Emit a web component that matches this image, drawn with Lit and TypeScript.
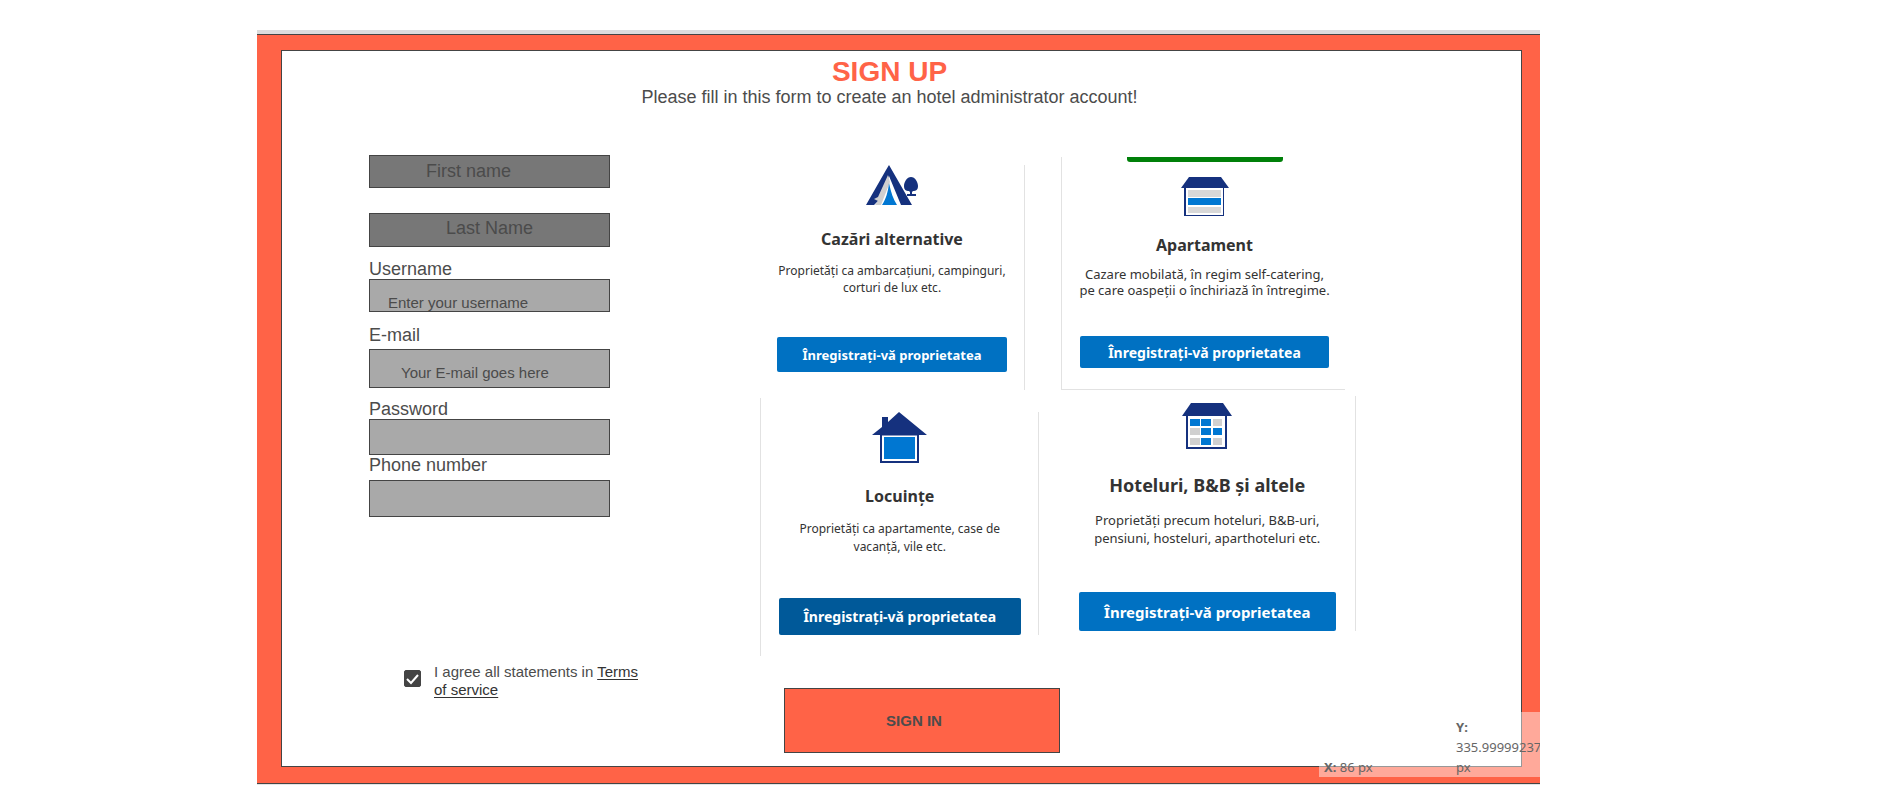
import { LitElement, html, css, svg, nothing } from "lit";
import { customElement } from "lit/decorators.js";

const tentIcon = svg`
  <svg class="icon" width="52" height="41" viewBox="0 0 52 41" aria-hidden="true">
    <path fill="#15317e" d="M23 0 46 40H35L23 11 12 36 8 40H0L20 5Z"/>
    <path fill="#cfcfcf" d="M22 10 24 17 15 40H9L12 36 8 34 12 32Z"/>
    <path fill="#0077d2" d="M23 18C25 27 27 34 31 40H16C20 34 22 27 23 18Z"/>
    <path fill="#15317e" d="M45 12c4 0 7 5 7 9s-2 5-5 5l-1 1v2h4v2h-9v-2h3v-2l-1-1c-3 0-5-1-5-5s3-9 7-9Z"/>
  </svg>`;

const shutterIcon = svg`
  <svg class="icon" width="48" height="39" viewBox="0 0 48 39" aria-hidden="true">
    <path fill="#15317e" d="M8 0H40L48 11H0Z"/>
    <path fill="#15317e" d="M3 11H43V39H3Z"/>
    <path fill="#fff" d="M5 11H42V38H5Z"/>
    <path fill="#d8d8d8" d="M7 13H40V20H7ZM7 30H40V36H7Z"/>
    <path fill="#0077d2" d="M7 21H40V28H7Z"/>
  </svg>`;

const houseIcon = svg`
  <svg class="icon" width="55" height="51" viewBox="0 0 55 51" aria-hidden="true">
    <path fill="#15317e" d="M0 23 10 15V5H16V10L27 0 55 23H47V51H8V23Z"/>
    <path fill="#fff" d="M10 23.500H45V49H10Z"/>
    <path fill="#0077d2" d="M12 25H43V47H12Z"/>
  </svg>`;

const hotelIcon = svg`
  <svg class="icon" width="50" height="46" viewBox="0 0 50 46" aria-hidden="true">
    <path fill="#15317e" d="M9 0H41L50 13H0Z"/>
    <path fill="#15317e" d="M4 13H45V46H4Z"/>
    <path fill="#fff" d="M6 13H43V44H6Z"/>
    <path fill="#d0d0d0" d="M31 16H40V23H31ZM8 25H18V32H8ZM8 35H18V42H8ZM31 35H40V42H31Z"/>
    <path fill="#0077d2" d="M8 16H18V23H8ZM19 16H29V23H19ZM19 25H29V32H19ZM31 25H40V32H31ZM19 35H29V42H19Z"/>
  </svg>`;

const rows = [
  [
    { kind: "alt", icon: tentIcon, title: "Cazări alternative",
      lines: ["Proprietăți ca ambarcațiuni, campinguri,", "corturi de lux etc."] },
    { kind: "apt", icon: shutterIcon, title: "Apartament", bar: true,
      lines: ["Cazare mobilată, în regim self-catering,", "pe care oaspeții o închiriază în întregime."] },
  ],
  [
    { kind: "home", icon: houseIcon, title: "Locuințe",
      lines: ["Proprietăți ca apartamente, case de", "vacanță, vile etc."] },
    { kind: "hotel", icon: hotelIcon, title: "Hoteluri, B&B și altele",
      lines: ["Proprietăți precum hoteluri, B&B-uri,", "pensiuni, hosteluri, aparthoteluri etc."] },
  ],
];

@customElement("app-root")
export class AppRoot extends LitElement {
  static styles = css`
    :host {
      display: block;
      padding: 30px 352px 24px 257px;
      background: #fff;
      color: #4c4c4c;
      font-family: "Liberation Sans", Arial, sans-serif;
    }
    *, *::before { box-sizing: border-box; }
    h1, h2, p { margin: 0; }
    input, button { font-family: inherit; color: inherit; margin: 0; border-radius: 0; }

    .frame {
      position: relative;
      overflow: hidden;
      border-top: 4px solid #dcdcdc;
      border-bottom: 1px solid #e4e4e4;
    }
    .band {
      background: #ff6347;
      border: solid #444;
      border-width: 1px 0;
      padding: 15px 18px 16px 24px;
    }
    .sheet {
      background: #fff;
      border: 1px solid #444;
      padding: 6px 0 13px;
    }
    .head { text-align: center; padding-right: 24px; }
    h1 { font-size: 28px; line-height: 30px; color: #ff6347; }
    .lead { font-size: 18px; line-height: 20px; }

    form {
      display: grid;
      grid-template-columns: 270px minmax(0, 1fr);
      column-gap: 121px;
      padding: 0 165px 0 87px;
      margin-top: 48px;
    }
    .fields { display: flex; flex-direction: column; align-items: flex-start; }
    .fields label.name { font-size: 18px; line-height: 20px; }
    .box {
      width: 241px;
      border: 1px solid #444;
      background: #a9a9a9;
      font-size: 15px;
      outline: 0;
    }
    .box::placeholder { color: #4b4b4b; opacity: 1; }
    .dark { background: #777; font-size: 18px; }
    .first { height: 33px; padding: 0 0 0 56px; margin-bottom: 25px; }
    .last { height: 34px; padding: 0 0 4px 76px; margin-bottom: 12px; }
    .user { height: 33px; padding: 14px 0 0 18px; margin-bottom: 13px; }
    .mail { height: 39px; padding: 8px 0 0 31px; margin: 4px 0 11px; }
    .pass { height: 36px; padding: 0 16px; }
    .phone { height: 37px; padding: 0 16px; margin-top: 5px; }

    .agree {
      display: flex;
      gap: 13px;
      margin-top: 146px;
      padding-left: 35px;
      font-size: 15px;
      line-height: 18px;
    }
    .tick {
      appearance: none;
      flex: none;
      width: 17px;
      height: 17px;
      margin-top: 7px;
      border: 1px solid #444;
      border-radius: 2px;
    }
    .tick:checked {
      background: #444 url("data:image/svg+xml,%3Csvg xmlns='http://www.w3.org/2000/svg' viewBox='0 0 15 15'%3E%3Cpath d='M2 8l4 4 7-8' fill='none' stroke='white' stroke-width='2'/%3E%3C/svg%3E");
    }
    .agree a { color: #333; text-underline-offset: 2px; }

    .row { display: flex; }
    .upper { min-height: 235px; padding: 2px 11px 0 0; gap: 36px; }
    .lower { min-height: 266px; padding-top: 6px; gap: 20px; }
    .card { display: flex; font-family: "Noto Sans", "Open Sans", sans-serif; color: #333; min-width: 0; }
    .body {
      flex: 1;
      min-width: 0;
      display: flex;
      flex-direction: column;
      align-items: center;
      text-align: center;
    }
    .icon { display: block; flex: none; }
    .bar { width: 156px; height: 5px; margin-bottom: 15px; background: #008009; border-radius: 0 0 3px 3px; }
    h2 { font-size: 16px; line-height: 20px; white-space: nowrap; }
    .desc { font-size: 12px; white-space: nowrap; }
    .desc span { display: block; }
    .reg {
      width: 100%;
      margin-top: auto;
      padding: 0;
      border: 0;
      border-radius: 2px;
      background: #0071c2;
      color: #fff;
      font-size: 14px;
      font-weight: 700;
      white-space: nowrap;
    }

    .alt { flex: 265 1 0; padding-top: 8px; }
    .alt .body { border-right: 1px solid #e2e2e2; padding: 0 17px 18px; }
    .alt h2 { margin: 23px 0 13px; }
    .alt .desc { line-height: 17px; }
    .alt .reg { height: 35px; font-size: 13px; }

    .apt { flex: 284 1 0; }
    .apt .body { border: solid #e2e2e2; border-width: 0 0 1px 1px; padding: 0 16px 21px 18px; }
    .apt h2 { margin: 19px 0 11px; }
    .apt .desc { font-size: 13px; line-height: 16px; }
    .apt .reg { height: 32px; }

    .home { flex: 278 1 0; margin-top: 2px; border-left: 1px solid #e2e2e2; padding: 14px 0 21px; }
    .home .body { border-right: 1px solid #e2e2e2; padding: 0 17px 0 18px; }
    .home h2 { margin: 23px 0 14px; }
    .home .desc { line-height: 18px; }
    .home .reg { height: 37px; background: #005999; }

    .hotel { flex: 298 1 0; padding-bottom: 25px; }
    .hotel .body { border-right: 1px solid #e2e2e2; padding: 7px 19px 0 20px; }
    .hotel h2 { margin: 24px 0 14px; font-size: 18px; line-height: 24px; }
    .hotel .desc { font-size: 13px; line-height: 18px; }
    .hotel .reg { height: 39px; font-size: 15px; }

    .submit {
      display: block;
      width: 276px;
      height: 65px;
      margin: 32px 0 0 24px;
      padding: 0 16px 0 0;
      border: 1px solid #444;
      background: #ff6347;
      font-size: 15px;
      font-weight: 700;
    }

    .coords {
      position: absolute;
      right: 0;
      bottom: 7px;
      width: 221px;
      height: 65px;
      display: flex;
      align-items: flex-end;
      justify-content: space-between;
      padding-left: 5px;
      background: rgba(255, 255, 255, 0.45);
      color: #666;
      font: 13px/20px "Noto Sans", sans-serif;
    }
    .coords .y { width: 84px; }
  `;

  render() {
    return html`
      <div class="frame">
        <div class="band">
          <main class="sheet">
            <header class="head">
              <h1>SIGN UP</h1>
              <p class="lead">Please fill in this form to create an hotel administrator account!</p>
            </header>
            <form @submit=${(e: Event) => e.preventDefault()}>
              <div class="fields">
                <input class="box dark first" type="text" aria-label="First name" placeholder="First name" />
                <input class="box dark last" type="text" aria-label="Last Name" placeholder="Last Name" />
                <label class="name" for="user">Username</label>
                <input class="box user" id="user" type="text" placeholder="Enter your username" />
                <label class="name" for="mail">E-mail</label>
                <input class="box mail" id="mail" type="email" placeholder="Your E-mail goes here" />
                <label class="name" for="pass">Password</label>
                <input class="box pass" id="pass" type="password" />
                <label class="name" for="phone">Phone number</label>
                <input class="box phone" id="phone" type="tel" />
                <div class="agree">
                  <input class="tick" id="agree" type="checkbox" checked />
                  <label for="agree">I agree all statements in <a href="#terms">Terms of service</a></label>
                </div>
              </div>
              <div>
                ${rows.map((cards, i) => html`
                  <div class="row ${i === 0 ? "upper" : "lower"}">
                    ${cards.map((c) => html`
                      <article class="card ${c.kind}">
                        <div class="body">
                          ${"bar" in c ? html`<div class="bar"></div>` : nothing}
                          ${c.icon}
                          <h2>${c.title}</h2>
                          <p class="desc">${c.lines.map((l) => html`<span>${l}</span>`)}</p>
                          <button class="reg" type="button">Înregistrați-vă proprietatea</button>
                        </div>
                      </article>`)}
                  </div>`)}
                <button class="submit" type="submit">SIGN IN</button>
              </div>
            </form>
          </main>
        </div>
        <div class="coords">
          <div><b>X:</b> 86 px</div>
          <div class="y"><b>Y:</b> 335.99999237 px</div>
        </div>
      </div>
    `;
  }
}
